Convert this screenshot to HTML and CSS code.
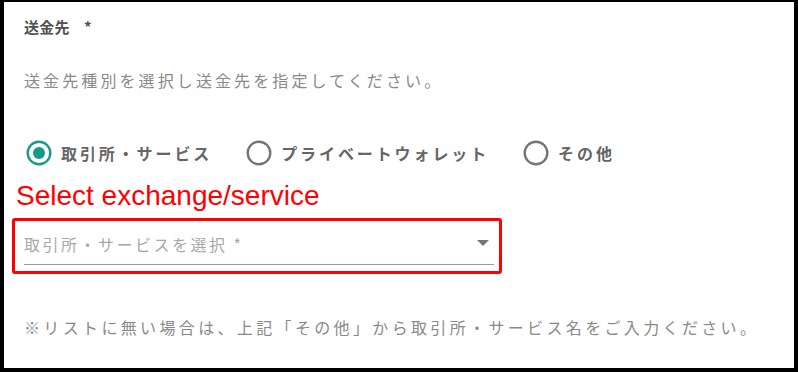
FILE: index.html
```html
<!DOCTYPE html>
<html lang="ja">
<head>
<meta charset="utf-8">
<link rel="stylesheet" href="styles.css">
</head>
<body>
<div class="panel">
  <div class="title">送金先<span class="req">*</span></div>
  <div class="desc">送金先種別を選択し送金先を指定してください。</div>
  <div class="radios">
    <label class="radio checked">
      <svg class="ricon" viewBox="0 0 26 26" width="26" height="26"><circle cx="13" cy="13" r="11.3" fill="none" stroke="#16998a" stroke-width="2.4"/><circle cx="13" cy="13" r="6" fill="#16998a"/></svg>
      <span class="rlabel">取引所・サービス</span>
    </label>
    <label class="radio">
      <svg class="ricon" viewBox="0 0 26 26" width="26" height="26"><circle cx="13" cy="13" r="11.3" fill="none" stroke="#757575" stroke-width="2.4"/></svg>
      <span class="rlabel">プライベートウォレット</span>
    </label>
    <label class="radio">
      <svg class="ricon" viewBox="0 0 26 26" width="26" height="26"><circle cx="13" cy="13" r="11.3" fill="none" stroke="#757575" stroke-width="2.4"/></svg>
      <span class="rlabel">その他</span>
    </label>
  </div>
  <div class="annot">Select exchange/service</div>
  <div class="redbox">
    <div class="select">
      <span class="placeholder">取引所・サービスを選択 *</span>
      <svg class="arrow" viewBox="0 0 12 6" width="12" height="6"><path d="M0 0 L12 0 L6 6 Z" fill="#757575"/></svg>
    </div>
  </div>
  <div class="note">※リストに無い場合は、上記「その他」から取引所・サービス名をご入力ください。</div>
</div>
</body>
</html>
```
FILE: styles.css
```css
html, body {
  margin: 0;
  padding: 0;
  background: #000;
}
body {
  width: 798px;
  height: 372px;
  overflow: hidden;
  font-family: "Noto Sans CJK JP", "Noto Sans", sans-serif;
}
.panel {
  margin: 2px 4px 0 4px;
  height: 366px;
  background: #fff;
  padding: 15px 20px 0 20px;
  box-sizing: border-box;
}
.title {
  font-size: 15px;
  line-height: 20px;
  font-weight: 700;
  letter-spacing: 0.3px;
  color: #505050;
}
.req {
  margin-left: 14px;
  font-size: 15px;
}
.desc {
  margin-top: 31px;
  font-size: 16px;
  line-height: 24px;
  letter-spacing: 3.1px;
  color: #8a8a8a;
}
.radios {
  margin-top: 40px;
  height: 42px;
  display: flex;
  align-items: center;
  padding-left: 2px;
  gap: 34px;
}
.radio {
  display: flex;
  align-items: center;
  gap: 9px;
}
.ricon {
  display: block;
}
.rlabel {
  font-size: 16px;
  font-weight: 700;
  letter-spacing: 2.9px;
  color: #666;
}
.annot {
  margin-top: 7px;
  margin-left: -8px;
  font-family: "Liberation Sans", Arial, sans-serif;
  font-size: 28px;
  line-height: 30px;
  color: #ff0000;
}
.redbox {
  margin-top: 7px;
  margin-left: -12px;
  width: 490px;
  height: 56px;
  box-sizing: border-box;
  border: 3px solid #ff0000;
  border-radius: 3px;
  padding: 0 5px 0 9px;
}
.select {
  height: 43px;
  border-bottom: 1px solid #9a9a9a;
  display: flex;
  align-items: center;
  justify-content: space-between;
  padding-right: 5px;
}
.placeholder {
  font-size: 16px;
  letter-spacing: 2.5px;
  color: #a8a8a8;
  padding-top: 3px;
}
.arrow {
  display: block;
}
.note {
  margin-top: 41px;
  font-size: 16px;
  line-height: 24px;
  letter-spacing: 3.35px;
  color: #8a8a8a;
}
```
